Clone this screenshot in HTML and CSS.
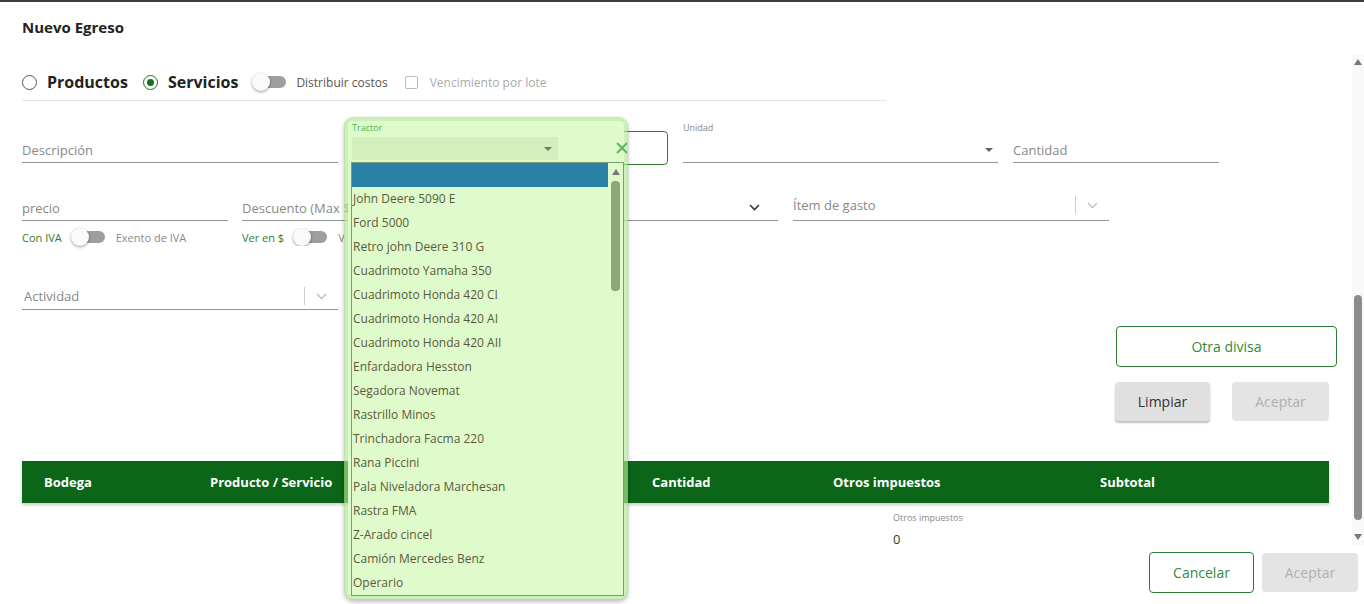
FILE: index.html
```html
<!DOCTYPE html>
<html lang="es">
<head>
    <meta charset="UTF-8">
    <title>Nuevo Egreso</title>
    <link rel="stylesheet" href="styles.css">
</head>
<body>

    <h1 class="title">Nuevo Egreso</h1>

    <!-- Zona con scroll -->
    <div class="scroll-area">
        <div class="content">

            <!-- Tipo de egreso -->
            <div class="type-row">
                <span class="radio"></span>
                <span class="type-label">Productos</span>
                <span class="radio checked"></span>
                <span class="type-label">Servicios</span>
                <span class="switch"><span class="knob"></span><span class="track"></span></span>
                <span class="opt-label">Distribuir costos</span>
                <span class="checkbox"></span>
                <span class="opt-label muted">Vencimiento por lote</span>
            </div>

            <!-- Fila 1 -->
            <div class="form-row row-1">
                <div class="field w316">Descripción</div>
                <div class="field w208 gap12"></div>
                <div class="clear-box gap15">
                    <svg class="clear-icon" width="14" height="14" viewBox="0 0 14 14"><path d="M2 2 L12 12 M12 2 L2 12" stroke="#5cb85c" stroke-width="2" fill="none"/></svg>
                </div>
                <div class="field field-labelled w315 gap15">
                    <span class="small-label">Unidad</span>
                    <span class="select-line"><span class="caret"></span></span>
                </div>
                <div class="field w206 gap15">Cantidad</div>
            </div>

            <!-- Fila 2 -->
            <div class="form-row row-2">
                <div class="field w206">precio</div>
                <div class="field w206 gap14">Descuento (Max $ 0)</div>
                <div class="field w316 gap14 select-field">
                    <span></span>
                    <svg class="chev" width="11" height="7" viewBox="0 0 11 7"><path d="M1 1 L5.5 5.5 L10 1" stroke="#333" stroke-width="1.6" fill="none"/></svg>
                </div>
                <div class="field w316 gap15 select-field item-field">
                    <span>Ítem de gasto</span>
                    <span class="select-tools">
                        <span class="sep"></span>
                        <svg width="11" height="7" viewBox="0 0 11 7"><path d="M1 1 L5.5 5.5 L10 1" stroke="#bbb" stroke-width="1.3" fill="none"/></svg>
                    </span>
                </div>
            </div>

            <!-- Fila 3 -->
            <div class="form-row row-3">
                <div class="toggle-group">
                    <span class="on-label">Con IVA</span>
                    <span class="switch"><span class="knob"></span><span class="track"></span></span>
                    <span class="off-label">Exento de IVA</span>
                </div>
                <div class="toggle-group clipped">
                    <span class="on-label">Ver en $</span>
                    <span class="switch"><span class="knob"></span><span class="track"></span></span>
                    <span class="off-label">Ver en USD</span>
                </div>
            </div>

            <!-- Fila 4 -->
            <div class="form-row row-4">
                <div class="field w316 select-field activity">
                    <span>Actividad</span>
                    <span class="select-tools">
                        <span class="sep"></span>
                        <svg width="11" height="7" viewBox="0 0 11 7"><path d="M1 1 L5.5 5.5 L10 1" stroke="#bbb" stroke-width="1.3" fill="none"/></svg>
                    </span>
                </div>
            </div>

            <!-- Acciones -->
            <div class="side-actions">
                <button class="btn btn-outline btn-wide">Otra divisa</button>
                <div class="btn-row">
                    <button class="btn btn-grey">Limpiar</button>
                    <button class="btn btn-disabled">Aceptar</button>
                </div>
            </div>

            <!-- Tabla -->
            <div class="table-head">
                <div>Bodega</div>
                <div>Producto / Servicio</div>
                <div></div>
                <div>Cantidad</div>
                <div>Otros impuestos</div>
                <div>Subtotal</div>
            </div>
            <div class="table-totals">
                <div></div><div></div><div></div><div></div>
                <div class="total-cell">
                    <span class="small-label">Otros impuestos</span>
                    <span class="total-value">0</span>
                </div>
                <div></div>
            </div>
        </div>

        <div class="scrollbar">
            <span class="arrow-up"></span>
            <span class="thumb"></span>
            <span class="arrow-down"></span>
        </div>
    </div>

    <!-- Pie -->
    <div class="footer">
        <button class="btn btn-outline btn-cancel">Cancelar</button>
        <button class="btn btn-disabled btn-accept">Aceptar</button>
    </div>

    <!-- Lista desplegada de Tractor -->
    <div class="dropdown">
        <div class="dd-label">Tractor</div>
        <div class="dd-select"><span class="caret"></span></div>
        <div class="dd-list">
            <div class="dd-options">
                <div class="dd-option selected"></div>
                <div class="dd-option">John Deere 5090 E</div>
                <div class="dd-option">Ford 5000</div>
                <div class="dd-option">Retro john Deere 310 G</div>
                <div class="dd-option">Cuadrimoto Yamaha 350</div>
                <div class="dd-option">Cuadrimoto Honda 420 CI</div>
                <div class="dd-option">Cuadrimoto Honda 420 AI</div>
                <div class="dd-option">Cuadrimoto Honda 420 AII</div>
                <div class="dd-option">Enfardadora Hesston</div>
                <div class="dd-option">Segadora Novemat</div>
                <div class="dd-option">Rastrillo Minos</div>
                <div class="dd-option">Trinchadora Facma 220</div>
                <div class="dd-option">Rana Piccini</div>
                <div class="dd-option">Pala Niveladora Marchesan</div>
                <div class="dd-option">Rastra FMA</div>
                <div class="dd-option">Z-Arado cincel</div>
                <div class="dd-option">Camión Mercedes Benz</div>
                <div class="dd-option">Operario</div>
            </div>
            <div class="dd-scroll">
                <span class="arrow-up"></span>
                <span class="dd-thumb"></span>
            </div>
        </div>
    </div>

</body>
</html>
```

FILE: styles.css
```css
/* Generales */
* {
    box-sizing: border-box;
    margin: 0;
    padding: 0;
}

body {
    font-family: "Open Sans", Arial, sans-serif;
    color: #333;
    background: #fff;
    width: 1364px;
    height: 604px;
    overflow: hidden;
    border-top: 2px solid #3c3c3c;
}

button {
    font-family: inherit;
    cursor: pointer;
}

.title {
    height: 53px;
    padding: 16px 22px 0;
    font-size: 15px;
    line-height: 18px;
    font-weight: 700;
    color: #222;
}

/* Zona con scroll */
.scroll-area {
    display: flex;
    height: 490px;
}

.content {
    flex: 1;
    padding-left: 22px;
}

.scrollbar {
    width: 12px;
    background: #f9f9f9;
    display: flex;
    flex-direction: column;
    align-items: center;
}

.arrow-up, .arrow-down {
    width: 0;
    height: 0;
    border-left: 4px solid transparent;
    border-right: 4px solid transparent;
}

.arrow-up {
    border-bottom: 6px solid #777;
    margin-top: 4px;
}

.arrow-down {
    border-top: 6px solid #777;
    margin-top: 14px;
}

.scrollbar .thumb {
    width: 8px;
    height: 225px;
    margin-top: 230px;
    border-radius: 4px;
    background: #8c8c8c;
}

/* Tipo de egreso */
.type-row {
    display: flex;
    align-items: center;
    width: 864px;
    height: 35px;
    margin-top: 11px;
    padding-bottom: 2px;
    border-bottom: 1px solid #e2e2e2;
}

.radio {
    width: 15px;
    height: 15px;
    border: 1.5px solid #555;
    border-radius: 50%;
    margin-right: 10px;
    display: flex;
    align-items: center;
    justify-content: center;
}

.radio.checked {
    border-color: #1b6e20;
}

.radio.checked::after {
    content: "";
    width: 7px;
    height: 7px;
    border-radius: 50%;
    background: #1b6e20;
}

.type-label {
    font-size: 16px;
    font-weight: 700;
    color: #222;
    margin-right: 15px;
}

.switch {
    display: flex;
    align-items: center;
    width: 34px;
}

.knob {
    width: 18px;
    height: 18px;
    border-radius: 50%;
    background: #fafafa;
    box-shadow: 0 1px 3px rgba(0, 0, 0, 0.4);
    position: relative;
    z-index: 1;
}

.track {
    width: 29px;
    height: 12px;
    margin-left: -13px;
    border-radius: 6px;
    background: #9e9e9e;
}

.type-row .switch {
    margin-left: -1px;
}

.opt-label {
    font-size: 12px;
    color: #555;
    margin-left: 10px;
}

.opt-label.muted {
    color: #aaa;
    margin-left: 12px;
}

.checkbox {
    width: 13px;
    height: 13px;
    border: 1.5px solid #bbb;
    border-radius: 2px;
    margin-left: 17px;
}

/* Campos */
.form-row {
    display: flex;
    align-items: flex-end;
}

.row-1 {
    height: 50px;
    margin-top: 12px;
}

.row-2 {
    margin-top: 24px;
}

.row-3 {
    height: 18px;
    margin-top: 7px;
    align-items: center;
}

.row-4 {
    margin-top: 30px;
}

.field {
    display: flex;
    align-items: flex-end;
    height: 34px;
    padding-bottom: 4px;
    border-bottom: 1px solid #949494;
    font-size: 13px;
    line-height: 16px;
    color: #888;
}

.w206 { width: 206px; }
.w208 { width: 208px; }
.w315 { width: 315px; }
.w316 { width: 316px; }
.gap12 { margin-left: 12px; }
.gap14 { margin-left: 14px; }
.gap15 { margin-left: 15px; }

.field-labelled {
    height: 40px;
    flex-direction: column;
    align-items: stretch;
    justify-content: space-between;
}

.small-label {
    font-size: 9px;
    line-height: 10px;
    color: #888;
}

.select-line {
    display: flex;
    justify-content: flex-end;
    align-items: center;
    height: 16px;
    padding-right: 5px;
}

.caret {
    width: 0;
    height: 0;
    border-left: 4px solid transparent;
    border-right: 4px solid transparent;
    border-top: 4px solid #666;
}

.clear-box {
    width: 95px;
    height: 34px;
    margin-bottom: -2px;
    border: 1px solid #2e7d32;
    border-radius: 4px;
    display: flex;
    align-items: center;
    padding-left: 41px;
}

/* la X queda por encima de la lista desplegada */
.clear-icon {
    position: relative;
    z-index: 2;
}

.select-field {
    justify-content: space-between;
    align-items: center;
    padding-top: 11px;
}

.select-field .chev {
    margin-right: 18px;
}

.item-field {
    padding-bottom: 8px;
}

.select-tools {
    display: flex;
    align-items: center;
    gap: 11px;
    margin-right: 11px;
}

.sep {
    width: 1px;
    height: 18px;
    background: #ccc;
}

.activity {
    padding-left: 2px;
}

/* Interruptores IVA */
.toggle-group {
    display: flex;
    align-items: center;
    width: 220px;
    font-size: 11px;
    white-space: nowrap;
}

.toggle-group.clipped {
    width: 102px;
    overflow: hidden;
}

.on-label {
    color: #2e7d32;
    margin-right: 9px;
}

.off-label {
    color: #888;
    margin-left: 11px;
}

/* Botones */
.btn {
    height: 39px;
    border: none;
    border-radius: 4px;
    font-size: 14px;
    font-weight: 500;
}

.btn-outline {
    background: #fff;
    border: 1px solid #2e7d32;
    color: #2e8b3a;
    height: 41px;
}

.btn-grey {
    width: 95px;
    background: #e0e0e0;
    color: #333;
    box-shadow: 0 2px 2px rgba(0, 0, 0, 0.25);
}

.btn-disabled {
    width: 97px;
    background: #e4e4e4;
    color: #b0b0b0;
    cursor: default;
}

.side-actions {
    width: 222px;
    margin-left: 1093px;
    margin-top: 16px;
}

.btn-wide {
    width: 221px;
    margin-left: 1px;
}

.btn-row {
    display: flex;
    gap: 22px;
    margin-top: 15px;
}

/* Tabla */
.table-head, .table-totals {
    display: grid;
    grid-template-columns: 166px 221px 221px 181px 267px 1fr;
    width: 1307px;
}

.table-head {
    height: 42px;
    margin-top: 40px;
    background: #0b6618;
    box-shadow: 0 2px 3px rgba(0, 0, 0, 0.2);
    align-items: center;
    color: #fff;
    font-size: 13px;
    font-weight: 700;
}

.table-head div {
    padding-left: 22px;
}

.total-cell {
    display: flex;
    flex-direction: column;
    padding-left: 82px;
    padding-top: 10px;
}

.total-value {
    font-size: 13px;
    line-height: 16px;
    margin-top: 8px;
    color: #333;
}

/* Pie */
.footer {
    display: flex;
    justify-content: flex-end;
    align-items: center;
    gap: 8px;
    height: 59px;
    padding: 7px 6px 11px 0;
}

.btn-cancel {
    width: 105px;
}

.btn-accept {
    width: 96px;
}

/* Lista desplegada */
.dropdown {
    position: absolute;
    left: 344px;
    top: 117px;
    width: 284px;
    padding: 2px 0 0 3px;
    border: 4px solid rgba(175, 232, 145, 0.65);
    border-radius: 9px;
    background: #dffbcc;
    background-clip: padding-box;
    box-shadow: 0 2px 4px rgba(0, 0, 0, 0.25);
}

.dd-label {
    font-size: 9px;
    line-height: 10px;
    color: #4cb447;
    padding-left: 1px;
}

.dd-select {
    width: 206px;
    height: 23px;
    margin: 4px 0 0 1px;
    background: #d2efbd;
    display: flex;
    justify-content: flex-end;
    align-items: center;
    padding-right: 6px;
}

.dd-select .caret {
    border-top-color: #777;
}

.dd-list {
    display: flex;
    width: 273px;
    height: 434px;
    margin-top: 2px;
    border: 1px solid #7f9c70;
    overflow: hidden;
}

.dd-options {
    flex: 1;
}

.dd-option {
    height: 24px;
    line-height: 24px;
    font-size: 12px;
    color: #5a5a3a;
    padding-left: 1px;
    white-space: nowrap;
}

.dd-option.selected {
    background: #2b80a6;
}

.dd-scroll {
    width: 15px;
    display: flex;
    flex-direction: column;
    align-items: center;
}

.dd-scroll .arrow-up {
    margin-top: 6px;
}

.dd-thumb {
    width: 9px;
    height: 110px;
    margin-top: 6px;
    border-radius: 4px;
    background: #8ea67c;
}
```
